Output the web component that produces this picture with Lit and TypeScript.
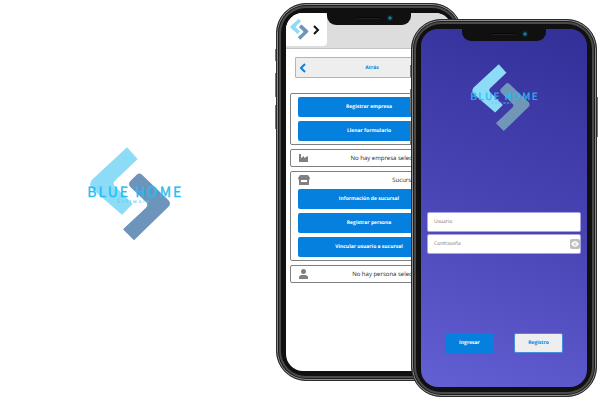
import { LitElement, html, css, svg } from "lit";
import { customElement, property } from "lit/decorators.js";

@customElement("brand-logo")
class BrandLogo extends LitElement {
  @property({ type: Boolean }) mark = false;

  static styles = css`
    :host { display: block; }
    .art { display: block; width: 100%; overflow: visible; }
    .light { fill: #8cdcf8; }
    .dark { fill: var(--logo-dark, #6d95bc); }
    .name {
      font: 42px "Noto Sans CJK SC", "Noto Sans", sans-serif;
      letter-spacing: 6px;
      fill: #22bdf2;
      stroke: #22bdf2;
      stroke-width: 1px;
    }
    .sub {
      font: 15px "Noto Sans CJK SC", "Noto Sans", sans-serif;
      letter-spacing: 5px;
      fill: #5cc6ee;
    }
  `;

  render() {
    return html`<svg class="art" viewBox="0 0 330 330" role="img" aria-label="Blue Home Software">
      <path class="light" d="M141 22 L173 57 L104 123 Q98 130 104 138 L158 192 L126 224 L36 146 Q25 133 36 119 Z" />
      <path class="dark" d="M170 104 Q178 97 186 104 L264 179 Q276 190 264 202 L162 301 L129 268 L198 203 Q206 194 198 186 L151 141 Q143 132 151 123 Z" />
      ${this.mark
        ? ""
        : svg`<text class="name" x="22" y="172">BLUE HOME</text>
            <text class="sub" x="110" y="190">Software</text>`}
    </svg>`;
  }
}

@customElement("phone-frame")
class PhoneFrame extends LitElement {
  static styles = css`
    :host { display: block; position: relative; }
    .body {
      box-sizing: border-box;
      height: 100%;
      display: flex;
      padding: 5px;
      border-radius: 30px;
      background: #101010;
      border: 1px solid #2b2b2b;
      box-shadow: inset 0 0 0 1px #8c8c8c, inset 0 0 0 2px #1c1c1c, inset 0 0 0 4px #4a4a4a;
    }
    .screen {
      flex: 1;
      display: flex;
      flex-direction: column;
      margin: 4px;
      border-radius: 17px;
      overflow: hidden;
    }
    .notch {
      position: absolute;
      top: 8px;
      left: 50%;
      width: 84px;
      height: 14px;
      margin-left: -42px;
      border-radius: 0 0 9px 9px;
      background: #101010;
      display: flex;
      align-items: center;
      justify-content: flex-end;
      gap: 7px;
      padding-right: 18px;
      box-sizing: border-box;
    }
    .speaker { width: 23px; height: 2px; border-radius: 1px; background: #060606; border-bottom: 1px solid #222; box-sizing: border-box; }
    .camera { width: 6px; height: 6px; border-radius: 50%; background: radial-gradient(#10869a 25%, #10242e 50%); }
    .key { position: absolute; left: -1px; width: 1px; background: #777; }
    .mute { top: 46px; height: 12px; }
    .up { top: 70px; height: 24px; }
    .down { top: 102px; height: 24px; }
    .power { top: 78px; height: 40px; left: auto; right: -1px; }
  `;

  render() {
    return html`
      <div class="body"><div class="screen"><slot></slot></div></div>
      <div class="notch"><span class="speaker"></span><span class="camera"></span></div>
      <span class="key mute"></span><span class="key up"></span>
      <span class="key down"></span><span class="key power"></span>
    `;
  }
}

const factory = svg`<path d="M1 1h2v4l3-2v2l4-2v6H1z" />`;
const store = svg`<path d="M2 0h8l2 3q0 1-1 2v5H1V5Q0 4 0 3zM3 5v2h6V5z" fill-rule="evenodd" />`;
const person = svg`<path d="M5.500 0a2.500 2.500 0 0 1 0 5a2.500 2.500 0 0 1 0-5zM1 10V8.500Q1 6 4 6h3q3 0 3 2.500V10z" />`;

@customElement("app-root")
class AppRoot extends LitElement {
  static styles = css`
    :host {
      display: flex;
      min-height: 100vh;
      box-sizing: border-box;
      background: #fff;
      font-family: "Open Sans", "Noto Sans", sans-serif;
      text-rendering: geometricPrecision;
      color: #222;
      overflow: hidden;
    }
    .brand { flex: 1; display: flex; align-items: center; justify-content: center; padding: 0 6px 10px 0; }
    .brand-logo { width: 110px; }
    .devices { display: flex; align-items: flex-start; padding: 3px 3px 3px 0; }
    .phone { width: 186px; height: 378px; }
    .front { margin: 16px 0 0 -51px; }

    button, input { font: inherit; margin: 0; box-sizing: border-box; text-rendering: inherit; }
    .admin { flex: 1; background: #fff; }
    .top { height: 36px; box-sizing: border-box; background: #ddd; border-bottom: 1px solid #c4c4c4; }
    .tab {
      display: flex;
      align-items: center;
      width: 41px;
      height: 33px;
      padding: 0 0 0 2px;
      border: 0;
      border-radius: 0 4px 4px 0;
      background: #fff;
    }
    .tab-logo { width: 25px; }
    .chevron { fill: none; stroke: #111; stroke-width: 2; width: 7px; height: 10px; }
    .back {
      display: grid;
      grid-template-columns: 7px 1fr;
      align-items: center;
      width: 148px;
      height: 21px;
      margin: 8px 0 14px 9px;
      padding: 0 4px 0 3px;
      border: 1px solid #82c0ee;
      border-radius: 1px;
      background: #eee;
      color: #0a80de;
      font-size: 5px;
      font-weight: 700;
    }
    .back .chevron { stroke: #0a80de; }
    .cards { display: flex; flex-direction: column; gap: 4px; padding: 1px 4px; }
    .card {
      display: flex;
      flex-direction: column;
      gap: 4px;
      padding: 3px 7px;
      border: 1px solid #808080;
      border-radius: 2px;
    }
    .line { display: flex; align-items: center; justify-content: space-between; height: 10px; padding-right: 6px; font-size: 6px; }
    .narrow { padding-right: 24px; }
    .icon { width: 12px; height: 10px; fill: #808080; }
    .action {
      height: 20px;
      border: 0;
      border-radius: 2px;
      background: #0680de;
      color: #fff;
      font-size: 5px;
      font-weight: 700;
    }

    .login {
      flex: 1;
      display: flex;
      flex-direction: column;
      align-items: center;
      padding: 30px 6px 34px;
      background: linear-gradient(200deg, #322f98, #4944b4 50%, #6360d4);
    }
    .login-logo { width: 79px; --logo-dark: #7096b8; }
    .fields { width: 100%; display: flex; flex-direction: column; gap: 2px; margin-top: 74px; }
    .field { position: relative; display: flex; }
    .input {
      width: 100%;
      height: 20px;
      padding: 0 6px;
      border: 1px solid #a8a4e0;
      border-radius: 2px;
      background: #fff;
      font-size: 5px;
    }
    .input::placeholder { color: #777; opacity: 1; }
    .eye {
      position: absolute;
      right: 1px;
      top: 5px;
      width: 10px;
      height: 10px;
      padding: 0;
      border: 0;
      border-radius: 2px;
      background: #bdbdbd;
      display: flex;
      align-items: center;
      justify-content: center;
    }
    .eye-icon { width: 8px; height: 6px; fill: #fff; }
    .buttons { display: flex; gap: 20px; margin-top: auto; }
    .buttons .action { width: 49px; }
    .buttons .alt { background: #eee; color: #0a80de; border: 1px solid #4a8cdc; }
  `;

  line(icon: unknown, text: string, cls = "") {
    return html`<div class="line ${cls}">
      <svg class="icon" viewBox="0 0 12 10" aria-hidden="true">${icon}</svg><span>${text}</span>
    </div>`;
  }

  action(text: string) {
    return html`<button class="action">${text}</button>`;
  }

  render() {
    return html`
      <div class="brand"><brand-logo class="brand-logo"></brand-logo></div>
      <div class="devices">
        <phone-frame class="phone">
          <div class="admin">
            <header class="top">
              <button class="tab" aria-label="Menú">
                <brand-logo class="tab-logo" mark></brand-logo>
                <svg class="chevron" viewBox="0 0 7 10"><path d="M1 1l4 4l-4 4" /></svg>
              </button>
            </header>
            <button class="back">
              <svg class="chevron" viewBox="0 0 7 10"><path d="M6 1l-4 4l4 4" /></svg><span>Atrás</span>
            </button>
            <div class="cards">
              <section class="card">${this.action("Registrar empresa")}${this.action("Llenar formulario")}</section>
              <section class="card">${this.line(factory, "No hay empresa seleccionada")}</section>
              <section class="card">
                ${this.line(store, "Sucursal", "narrow")}
                ${this.action("Información de sucursal")}
                ${this.action("Registrar persona")}
                ${this.action("Vincular usuario a sucursal")}
              </section>
              <section class="card">${this.line(person, "No hay persona seleccionada")}</section>
            </div>
          </div>
        </phone-frame>
        <phone-frame class="phone front">
          <form class="login">
            <brand-logo class="login-logo"></brand-logo>
            <div class="fields">
              <div class="field"><input class="input" aria-label="Usuario" placeholder="Usuario" /></div>
              <div class="field">
                <input class="input" type="password" aria-label="Contraseña" placeholder="Contraseña" />
                <button class="eye" type="button" aria-label="Mostrar contraseña">
                  <svg class="eye-icon" viewBox="0 0 8 6"><path d="M0 3q4-6 8 0q-4 6-8 0z" /><circle cx="4" cy="3" r="1.500" fill="#bdbdbd" /><circle cx="4" cy="3" r="0.700" /></svg>
                </button>
              </div>
            </div>
            <div class="buttons">
              <button class="action" type="button">Ingresar</button>
              <button class="action alt" type="button">Registro</button>
            </div>
          </form>
        </phone-frame>
      </div>
    `;
  }
}
